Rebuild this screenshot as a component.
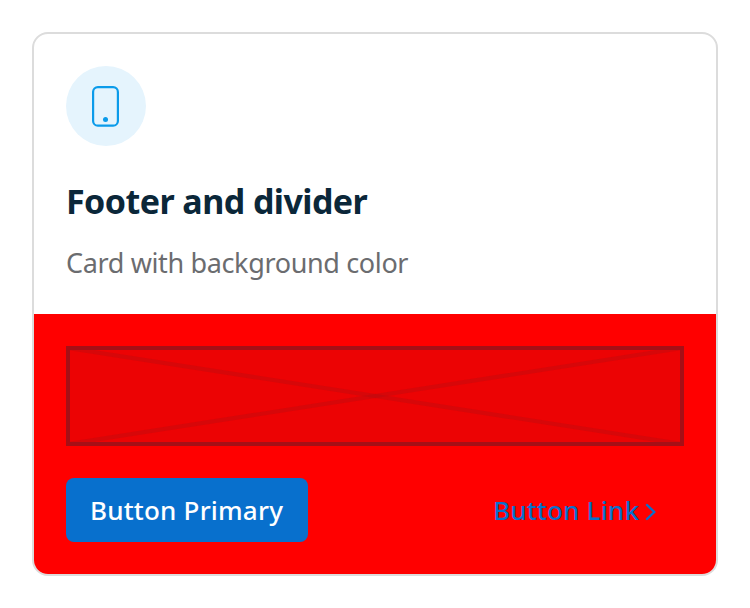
<main>
  <article class="card">
    <header>
      <div class="asset">
        <svg width="80" height="80" viewBox="0 0 80 80" fill="none">
          <rect x="27.1" y="21.1" width="24.8" height="38.6" rx="4.8" stroke="#0b9bea" stroke-width="2.2" />
          <circle cx="39.5" cy="53.5" r="2.5" fill="#0b9bea" />
        </svg>
      </div>
      <h2><span>Footer and divider</span></h2>
      <p><span>Card with background color</span></p>
    </header>
    <footer>
      <svg class="slot" width="618" height="100" viewBox="0 0 618 100" fill="none">
        <rect width="618" height="100" fill="#0b2739" fill-opacity=".08" />
        <path d="M2 2L616 98" stroke="#a60f16" stroke-opacity=".3" stroke-width="4" />
        <path d="M616 2L2 98" stroke="#a60f16" stroke-opacity=".3" stroke-width="4" />
        <rect x="2" y="2" width="614" height="96" stroke="#a60f16" stroke-width="4" />
      </svg>
      <div class="actions">
        <button class="primary"><span>Button Primary</span></button>
        <button class="link">
          <span>Button Link</span>
          <svg width="12" height="18" viewBox="0 0 12 18" fill="none">
            <path d="M2 2L9.4 9L2 16" stroke="#0870cd" stroke-width="2.4" stroke-linecap="round" stroke-linejoin="round" />
          </svg>
        </button>
      </div>
    </footer>
  </article>
</main>

<style>
  :global(body) { margin: 0; background: #fff; }
  main { padding: 32px; font-family: "Noto Sans", "Open Sans", sans-serif; }
  .card {
    box-sizing: border-box;
    width: 686px;
    height: 544px;
    border: 2px solid #dcdcdc;
    border-radius: 16px;
    overflow: hidden;
    background: #fff;
    display: flex;
    flex-direction: column;
  }
  header { box-sizing: border-box; height: 280px; padding: 32px; flex: none; }
  .asset { width: 80px; height: 80px; border-radius: 50%; background: #e5f4fd; }
  .asset svg { display: block; }
  h2, p { margin: 0; white-space: nowrap; }
  h2 { margin-top: 31px; font-size: 34px; line-height: 48px; font-weight: 700; color: #0b2739; letter-spacing: -0.56px; }
  p { margin-top: 18px; font-size: 27px; line-height: 40px; color: #6b6c6f; letter-spacing: -0.36px; }
  footer { flex: 1; background: #f00; padding: 32px; }
  .slot { display: block; }
  .actions { display: flex; justify-content: space-between; margin-top: 32px; }
  button {
    box-sizing: border-box;
    display: flex;
    align-items: center;
    height: 64px;
    border: 0;
    padding: 0 24px;
    font: 500 26px/40px "Noto Sans", "Open Sans", sans-serif;
    white-space: nowrap;
  }
  .primary { width: 242px; border-radius: 8px; background: #0870cd; color: #fff; letter-spacing: 0.2px; }
  .link { width: 215px; background: none; color: #0870cd; letter-spacing: 0.2px; }
  .link svg { margin-left: 6px; margin-top: 3px; }
</style>
